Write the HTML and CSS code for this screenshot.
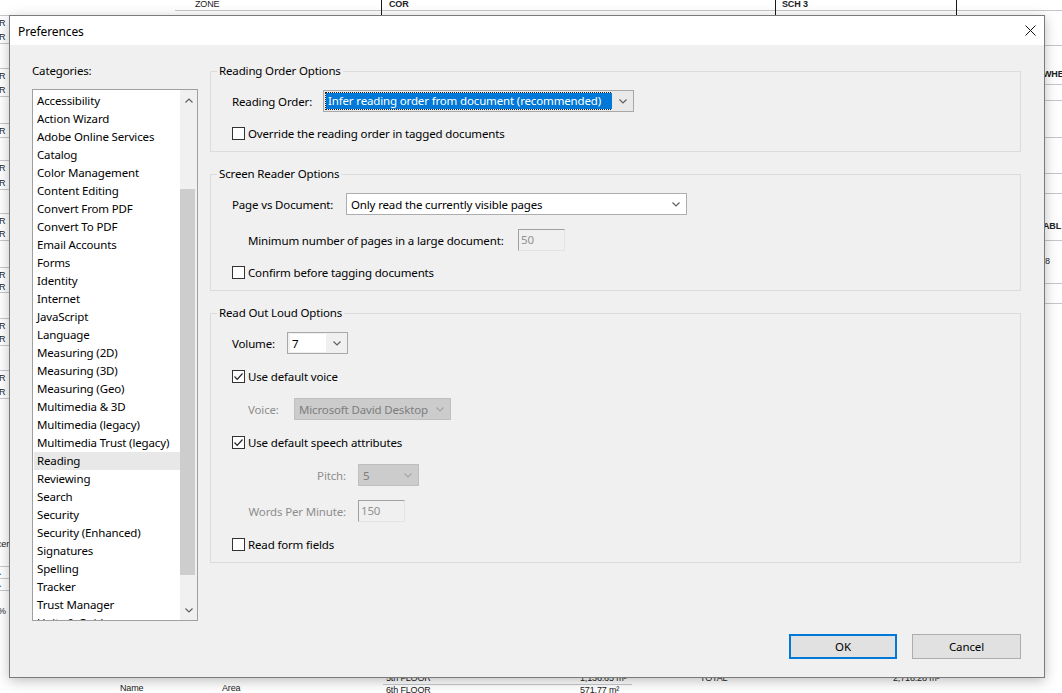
FILE: index.html
```html
<!DOCTYPE html>
<html>
<head>
   <meta http-equiv="Content-Type" content="text/html; charset=UTF-8" />
   <link rel="stylesheet" href="styles.css">
</head>
<body>

<!-- the drawing that sits behind the dialog -->
<svg class="doc" width="1062" height="693" viewBox="0 0 1062 693">
    <g class="doc-grid">
        <line x1="175" y1="10.5" x2="1062" y2="10.5"/>
        <line x1="0" y1="15.5" x2="9" y2="15.5"/>
        <line x1="0" y1="43.5" x2="9" y2="43.5"/>
        <line x1="0" y1="68.5" x2="9" y2="68.5"/>
        <line x1="0" y1="96.5" x2="9" y2="96.5"/>
        <line x1="0" y1="123.5" x2="9" y2="123.5"/>
        <line x1="0" y1="137.5" x2="9" y2="137.5"/>
        <line x1="0" y1="160.5" x2="9" y2="160.5"/>
        <line x1="0" y1="189.5" x2="9" y2="189.5"/>
        <line x1="0" y1="213.5" x2="9" y2="213.5"/>
        <line x1="0" y1="240.5" x2="9" y2="240.5"/>
        <line x1="0" y1="267.5" x2="9" y2="267.5"/>
        <line x1="0" y1="292.5" x2="9" y2="292.5"/>
        <line x1="0" y1="318.5" x2="9" y2="318.5"/>
        <line x1="0" y1="345.5" x2="9" y2="345.5"/>
        <line x1="0" y1="370.5" x2="9" y2="370.5"/>
        <line x1="0" y1="398.5" x2="9" y2="398.5"/>
        <line x1="0" y1="566.5" x2="9" y2="566.5"/>
        <line x1="0" y1="578.5" x2="9" y2="578.5"/>
        <line x1="0" y1="590.5" x2="9" y2="590.5"/>
        <line x1="1044" y1="45.5" x2="1062" y2="45.5"/>
        <line x1="1044" y1="84.5" x2="1062" y2="84.5"/>
        <line x1="1044" y1="100.5" x2="1062" y2="100.5"/>
        <line x1="1044" y1="137.5" x2="1062" y2="137.5"/>
        <line x1="1044" y1="173.5" x2="1062" y2="173.5"/>
        <line x1="1044" y1="193.5" x2="1062" y2="193.5"/>
        <line x1="1044" y1="240.5" x2="1062" y2="240.5"/>
        <line x1="1044" y1="283.5" x2="1062" y2="283.5"/>
        <line x1="1044" y1="303.5" x2="1062" y2="303.5"/>
        <line x1="383" y1="684.5" x2="632" y2="684.5"/>
    </g>
    <g class="doc-rules">
        <line x1="381.5" y1="0" x2="381.5" y2="16"/>
        <line x1="775.5" y1="0" x2="775.5" y2="16"/>
        <line x1="956.5" y1="0" x2="956.5" y2="16"/>
    </g>
    <g class="doc-text">
        <text x="195" y="7">ZONE</text>
        <text x="389" y="7" class="b">COR</text>
        <text x="782" y="7" class="b">SCH 3</text>

        <text x="-1" y="26">R</text>
        <text x="-1" y="40">R</text>
        <text x="-1" y="79">R</text>
        <text x="-1" y="93">R</text>
        <text x="-1" y="134">R</text>
        <text x="-1" y="171">R</text>
        <text x="-1" y="186">R</text>
        <text x="-1" y="224">R</text>
        <text x="-1" y="237">R</text>
        <text x="-1" y="278">R</text>
        <text x="-1" y="290">R</text>
        <text x="-1" y="329">R</text>
        <text x="-1" y="342">R</text>
        <text x="-1" y="381">R</text>
        <text x="-1" y="395">R</text>
        <text x="-3" y="547">cer</text>
        <text x="-1" y="575" class="blue">.</text>
        <text x="-1" y="587" class="blue">.</text>
        <text x="-2" y="614">%</text>

        <text x="1043" y="77" class="b">WHE</text>
        <text x="1043" y="229" class="b">ABL</text>
        <text x="1045" y="264">8</text>

        <text x="120" y="691">Name</text>
        <text x="222" y="691">Area</text>
        <text x="386" y="681">5th FLOOR</text>
        <text x="386" y="693">6th FLOOR</text>
        <text x="580" y="681">1,136.65 m²</text>
        <text x="580" y="693">571.77 m²</text>
        <text x="700" y="681">TOTAL</text>
        <text x="893" y="681">2,718.28 m²</text>
    </g>
</svg>

<div class="dialog">
    <div class="titlebar">
        <span class="title">Preferences</span>
        <svg class="close" width="11" height="11" viewBox="0 0 11 11">
            <path d="M0.5 0.5 L10.5 10.5 M10.5 0.5 L0.5 10.5" />
        </svg>
    </div>

    <div class="dlg-body">
        <div class="left">
            <div class="cat-label">Categories:</div>
            <div class="listbox">
                <ul class="items">
                    <li>Accessibility</li>
                    <li>Action Wizard</li>
                    <li>Adobe Online Services</li>
                    <li>Catalog</li>
                    <li>Color Management</li>
                    <li>Content Editing</li>
                    <li>Convert From PDF</li>
                    <li>Convert To PDF</li>
                    <li>Email Accounts</li>
                    <li>Forms</li>
                    <li>Identity</li>
                    <li>Internet</li>
                    <li>JavaScript</li>
                    <li>Language</li>
                    <li>Measuring (2D)</li>
                    <li>Measuring (3D)</li>
                    <li>Measuring (Geo)</li>
                    <li>Multimedia &amp; 3D</li>
                    <li>Multimedia (legacy)</li>
                    <li>Multimedia Trust (legacy)</li>
                    <li class="current">Reading</li>
                    <li>Reviewing</li>
                    <li>Search</li>
                    <li>Security</li>
                    <li>Security (Enhanced)</li>
                    <li>Signatures</li>
                    <li>Spelling</li>
                    <li>Tracker</li>
                    <li>Trust Manager</li>
                    <li>Units &amp; Guides</li>
                </ul>
                <div class="scrollbar">
                    <div class="sb-arrow">
                        <svg width="8" height="5" viewBox="0 0 8 5"><path d="M0.5 4.5 L4 1 L7.5 4.5"/></svg>
                    </div>
                    <div class="sb-track"><div class="sb-thumb"></div></div>
                    <div class="sb-arrow">
                        <svg width="8" height="5" viewBox="0 0 8 5"><path d="M0.5 0.5 L4 4 L7.5 0.5"/></svg>
                    </div>
                </div>
            </div>
        </div>

        <div class="right">
            <fieldset class="group">
                <legend>Reading Order Options</legend>
                <div class="row">
                    <span class="lbl w-order">Reading Order:</span>
                    <div class="combo combo-order">
                        <span class="combo-text"><span class="hilite">Infer reading order from document (recommended)</span></span>
                        <span class="combo-arrow"><svg width="8" height="5" viewBox="0 0 8 5"><path d="M0.5 0.5 L4 4 L7.5 0.5"/></svg></span>
                    </div>
                </div>
                <div class="row">
                    <span class="check"></span>
                    <span class="lbl">Override the reading order in tagged documents</span>
                </div>
            </fieldset>

            <fieldset class="group">
                <legend>Screen Reader Options</legend>
                <div class="row">
                    <span class="lbl w-page">Page vs Document:</span>
                    <div class="combo combo-white combo-page">
                        <span class="combo-text">Only read the currently visible pages</span>
                        <span class="combo-arrow"><svg width="8" height="5" viewBox="0 0 8 5"><path d="M0.5 0.5 L4 4 L7.5 0.5"/></svg></span>
                    </div>
                </div>
                <div class="row sub push">
                    <span class="lbl w-min">Minimum number of pages in a large document:</span>
                    <span class="field">50</span>
                </div>
                <div class="row">
                    <span class="check"></span>
                    <span class="lbl">Confirm before tagging documents</span>
                </div>
            </fieldset>

            <fieldset class="group group-loose">
                <legend>Read Out Loud Options</legend>
                <div class="row">
                    <span class="lbl w-vol">Volume:</span>
                    <div class="combo combo-edit combo-small">
                        <span class="combo-text">7</span>
                        <span class="combo-arrow"><svg width="8" height="5" viewBox="0 0 8 5"><path d="M0.5 0.5 L4 4 L7.5 0.5"/></svg></span>
                    </div>
                </div>
                <div class="row">
                    <span class="check checked"><svg width="11" height="11" viewBox="0 0 11 11"><path d="M1.5 5.5 L4.2 8.3 L9.5 2.5"/></svg></span>
                    <span class="lbl">Use default voice</span>
                </div>
                <div class="row sub">
                    <span class="lbl off w-voice">Voice:</span>
                    <div class="combo combo-off combo-voice">
                        <span class="combo-text">Microsoft David Desktop</span>
                        <span class="combo-arrow"><svg width="8" height="5" viewBox="0 0 8 5"><path d="M0.5 0.5 L4 4 L7.5 0.5"/></svg></span>
                    </div>
                </div>
                <div class="row">
                    <span class="check checked"><svg width="11" height="11" viewBox="0 0 11 11"><path d="M1.5 5.5 L4.2 8.3 L9.5 2.5"/></svg></span>
                    <span class="lbl">Use default speech attributes</span>
                </div>
                <div class="row sub">
                    <span class="lbl off w-speech">Pitch:</span>
                    <div class="combo combo-off combo-small">
                        <span class="combo-text">5</span>
                        <span class="combo-arrow"><svg width="8" height="5" viewBox="0 0 8 5"><path d="M0.5 0.5 L4 4 L7.5 0.5"/></svg></span>
                    </div>
                </div>
                <div class="row sub push">
                    <span class="lbl off w-speech">Words Per Minute:</span>
                    <span class="field">150</span>
                </div>
                <div class="row">
                    <span class="check"></span>
                    <span class="lbl">Read form fields</span>
                </div>
            </fieldset>
        </div>

        <div class="footer">
            <button class="btn btn-default">OK</button>
            <button class="btn btn-cancel">Cancel</button>
        </div>
    </div>
</div>

</body>
</html>
```

FILE: styles.css
```css
* {
    box-sizing: border-box;
}
body {
    margin: 0;
    width: 1062px;
    height: 693px;
    overflow: hidden;
    position: relative;
    background: #fff;
    font-family: "Noto Sans", "Open Sans", sans-serif;
    font-size: 11.5px;
    letter-spacing: -0.15px;
    color: #000;
}

/* background drawing */
svg.doc {
    position: absolute;
    left: 0;
    top: 0;
}
.doc-grid line {
    stroke: #c4c8cc;
    stroke-width: 1;
}
.doc-rules line {
    stroke: #1a1a1a;
    stroke-width: 1;
}
.doc-text text {
    font-family: "Liberation Sans", Arial, sans-serif;
    font-size: 9px;
    fill: #222;
}
.doc-text text.b {
    font-weight: bold;
}
.doc-text text.blue {
    fill: #3a78c8;
    font-weight: bold;
}

/* the window */
div.dialog {
    position: absolute;
    left: 9px;
    top: 15px;
    width: 1036px;
    height: 663px;
    border: 1px solid #7a7a7a;
    background: #f0f0f0;
    box-shadow: 0 3px 12px rgba(0, 0, 0, 0.25);
    display: flex;
    flex-direction: column;
}
div.titlebar {
    height: 29px;
    flex: none;
    background: #fff;
    display: flex;
    align-items: center;
    justify-content: space-between;
    padding: 0 8px 0 8px;
}
div.titlebar .title {
    font-size: 12px;
    letter-spacing: -0.1px;
    margin-top: 1px;
}
svg.close path {
    stroke: #111;
    stroke-width: 1;
    fill: none;
}

div.dlg-body {
    flex: 1;
    display: grid;
    grid-template-columns: 166px 811px;
    grid-template-rows: 1fr auto;
    column-gap: 12px;
    padding: 18px 22px 19px 22px;
}

/* categories */
div.cat-label {
    line-height: 16px;
}
div.listbox {
    margin-top: 10px;
    height: 532px;
    border: 1px solid #a0a0a0;
    background: #fff;
    display: flex;
}
ul.items {
    list-style: none;
    margin: 0;
    padding: 2px 0 0 1px;
    flex: 1;
    overflow: hidden;
}
ul.items li {
    height: 18px;
    line-height: 18px;
    padding-left: 3px;
    white-space: nowrap;
}
ul.items li.current {
    background-color: #e8e8e8;
}
div.scrollbar {
    width: 17px;
    background: #f0f0f0;
    display: flex;
    flex-direction: column;
}
div.sb-arrow {
    height: 20px;
    display: flex;
    align-items: center;
    justify-content: center;
}
div.sb-arrow path, span.combo-arrow path {
    stroke: #606060;
    stroke-width: 1.2;
    fill: none;
}
div.sb-track {
    flex: 1;
}
div.sb-thumb {
    margin: 79px 2px 0 0;
    height: 386px;
    background: #cdcdcd;
}

/* option groups */
fieldset.group {
    margin: 0 0 14px 0;
    border: 1px solid #dcdcdc;
    padding: 11px 0 7px 6px;
    display: flex;
    flex-direction: column;
    gap: 10px;
}
fieldset.group legend {
    padding: 0 2px;
    line-height: 16px;
}
div.row {
    height: 22px;
    display: flex;
    align-items: center;
    margin-left: 15px;
    white-space: nowrap;
}
div.row.sub {
    margin-left: 31px;
}
div.row.push {
    margin-top: 4px;
}
fieldset.group-loose {
    gap: 11px;
}
fieldset.group-loose div.row.push {
    margin-top: 3px;
}
span.lbl.off {
    color: #8d8d8d;
}
.w-order { width: 91px; }
.w-page { width: 114px; }
.w-min { width: 270px; }
.w-vol { width: 55px; }
.w-voice { width: 46px; }
.w-speech {
    width: 98px;
    margin-right: 12px;
    text-align: right;
}

span.check {
    width: 13px;
    height: 13px;
    border: 1px solid #333;
    background: #fff;
    margin-right: 3px;
    display: flex;
    align-items: center;
    justify-content: center;
}
span.check path {
    stroke: #222;
    stroke-width: 1.2;
    fill: none;
}

/* combo boxes */
div.combo {
    height: 22px;
    display: flex;
    border: 1px solid #a8a8a8;
    background: #e9e9e9;
}
span.combo-text {
    flex: 1;
    display: flex;
    align-items: center;
    padding-left: 4px;
    overflow: hidden;
}
span.combo-arrow {
    width: 21px;
    display: flex;
    align-items: center;
    justify-content: center;
}
div.combo-order { width: 311px; }
div.combo-order span.combo-text {
    padding: 2px 0 2px 2px;
}
span.hilite {
    display: block;
    width: 100%;
    height: 100%;
    line-height: 16px;
    padding-left: 2px;
    background: #0078d7;
    color: #fff;
    outline: 1px dotted #222;
    outline-offset: 0;
}
div.combo-white {
    background: #fff;
    border-color: #adadad;
}
div.combo-page { width: 341px; }
div.combo-small { width: 61px; }
div.combo-edit {
    border-color: #a8a8a8;
    background: #f0f0f0;
}
div.combo-edit span.combo-text {
    background: #fff;
    margin: 1px 0 1px 2px;
    padding-left: 2px;
}
div.combo-off {
    border-color: #bfbfbf;
    background: #cccccc;
    color: #7d7d7d;
}
div.combo-off span.combo-arrow path {
    stroke: #a6a6a6;
}
div.combo-voice { width: 157px; }

span.field {
    width: 47px;
    height: 22px;
    line-height: 20px;
    padding-left: 2px;
    border: 1px solid #e3e3e3;
    border-top-color: #a0a0a0;
    border-left-color: #a0a0a0;
    color: #909090;
}

/* buttons */
div.footer {
    grid-column: 1 / -1;
    display: flex;
    justify-content: flex-end;
    gap: 15px;
    margin-top: 13px;
}
button.btn {
    font-family: "Noto Sans", "Open Sans", sans-serif;
    font-size: 11.5px;
    letter-spacing: -0.1px;
    height: 25px;
    width: 109px;
    border: 1px solid #adadad;
    background: #e1e1e1;
    color: #000;
    padding: 0;
}
button.btn-default {
    width: 108px;
    border: 2px solid #0078d7;
}
```
